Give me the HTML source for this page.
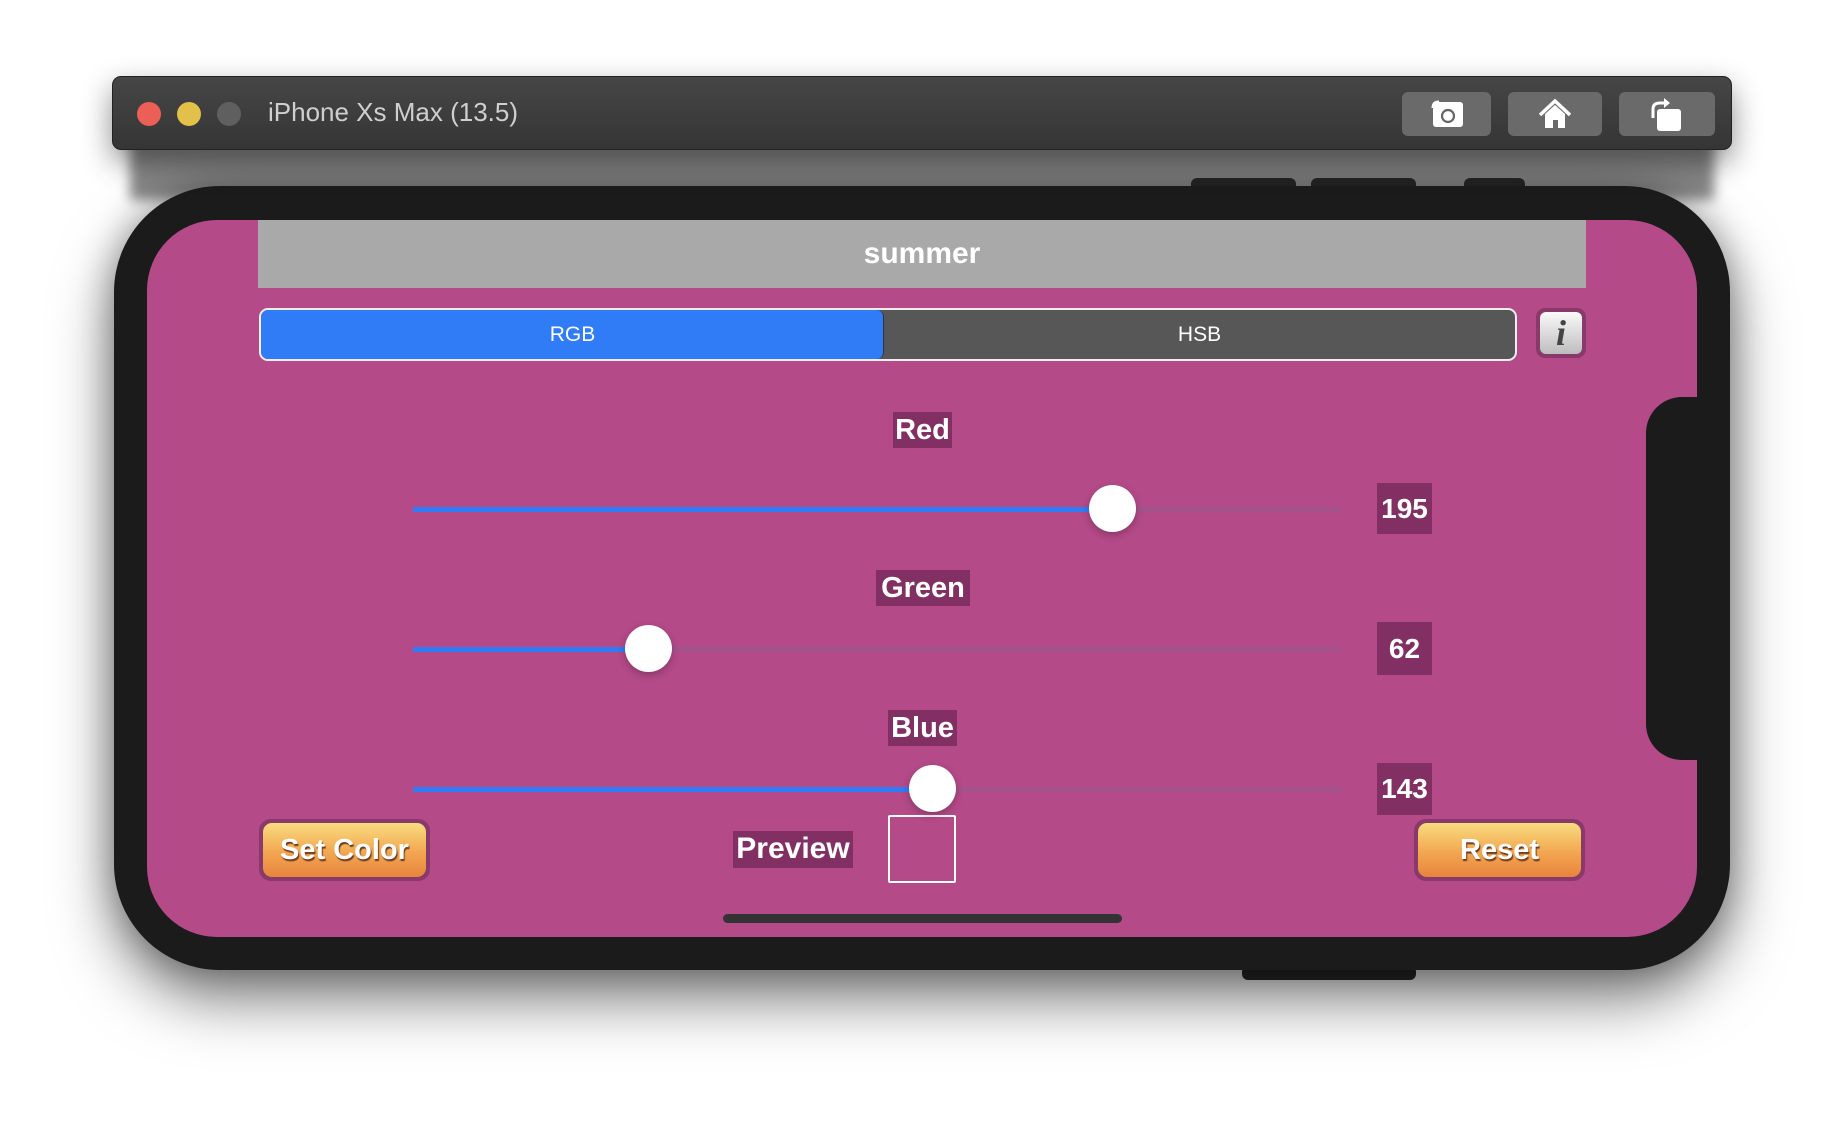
<!DOCTYPE html>
<html><head><meta charset="utf-8"><style>
*{margin:0;padding:0;box-sizing:border-box}
body{width:1844px;height:1136px;background:#fff;position:relative;overflow:hidden;font-family:"Liberation Sans",sans-serif}
.abs{position:absolute}
#tb{left:112px;top:76px;width:1620px;height:74px;border-radius:9px;background:linear-gradient(#464646,#353535);box-shadow:0 12px 30px rgba(0,0,0,.45);border:1px solid #222;z-index:3}
#gap{left:130px;top:140px;width:1584px;height:60px;background:#8a8a8a;filter:blur(6px);z-index:1}
.tl{width:24px;height:24px;border-radius:50%;top:102px;z-index:4}
.tbtn{top:92px;height:44px;border-radius:6px;background:#6a6a6a;z-index:4}
#phone{left:114px;top:186px;width:1616px;height:784px;border-radius:106px;background:#1b1b1b;box-shadow:0 30px 60px rgba(0,0,0,.5),0 0 35px rgba(0,0,0,.3);z-index:2}
.side{background:#2a2a2a;border-radius:6px;height:14px;z-index:2}
#screen{left:147px;top:220px;width:1550px;height:717px;border-radius:70px;background:#b44a88;z-index:3;overflow:hidden}
#notch{left:1646px;top:397px;width:60px;height:363px;background:#1b1b1b;border-radius:36px 0 0 36px;z-index:4}
.lbl{background:#823063;color:#fff;font-weight:bold;font-size:29px;text-align:center;z-index:5;line-height:36px}
.track{height:5px;left:413px;width:928px;background:rgba(150,90,140,.6);z-index:5}
.fill{height:5px;left:413px;background:#2f7cf6;z-index:5}
.thumb{width:47px;height:47px;border-radius:50%;background:#fff;box-shadow:0 3px 8px rgba(0,0,0,.25);z-index:6}
.val{background:#823063;color:#fff;font-weight:bold;font-size:28px;text-align:center;z-index:5}
.btn{height:62px;border-radius:12px;background:#8a3a6a;z-index:5;padding:4px}
.btn div{width:100%;height:100%;border-radius:9px;background:linear-gradient(#f9dc80,#f2a650 55%,#e8843e);color:#fff;font-weight:bold;font-size:29px;text-align:center;line-height:54px;text-shadow:1px 2px 1px #6b3a20}
</style></head><body>
<div id="gap" class="abs"></div>
<div id="tb" class="abs"></div>
<div class="abs tl" style="left:137px;background:#ec5f57"></div>
<div class="abs tl" style="left:177px;background:#e2c04a"></div>
<div class="abs tl" style="left:217px;background:#5f5f5f"></div>
<div class="abs" style="left:268px;top:97px;font-size:26px;color:#cfcfcf;z-index:4">iPhone Xs Max (13.5)</div>
<div class="abs tbtn" style="left:1402px;width:89px"><svg width="89" height="44"><rect x="31" y="10" width="30" height="25" rx="3" fill="#fff"/><path d="M31 16 q0-6 6-6" stroke="#fff" fill="none" stroke-width="3"/><circle cx="46" cy="24" r="6" fill="none" stroke="#666" stroke-width="2.2"/><path d="M28 14 v12" stroke="#6a6a6a" stroke-width="2"/></svg></div>
<div class="abs tbtn" style="left:1508px;width:94px"><svg width="94" height="44"><path d="M32 23 L47 9 L62 23" stroke="#fff" stroke-width="3.5" fill="none"/><path d="M37 22 L47 13 L57 22 V36 H37Z" fill="#fff"/><rect x="45" y="28" width="5" height="8" fill="#6a6a6a"/></svg></div>
<div class="abs tbtn" style="left:1619px;width:96px"><svg width="96" height="44"><rect x="38" y="17" width="24" height="22" rx="3" fill="#fff"/><path d="M34 26 V17 q0-6 7-6 h5" stroke="#fff" stroke-width="3" fill="none"/><path d="M45 6 L51 11 L45 16Z" fill="#fff"/></svg></div>
<div class="abs side" style="left:1191px;top:178px;width:105px"></div>
<div class="abs side" style="left:1311px;top:178px;width:105px"></div>
<div class="abs side" style="left:1464px;top:178px;width:61px"></div>
<div class="abs side" style="left:1242px;top:966px;width:174px"></div>
<div id="phone" class="abs"></div>
<div id="screen" class="abs"></div>
<div id="notch" class="abs"></div>
<div class="abs" style="left:258px;top:220px;width:1328px;height:68px;background:#a9a9a9;z-index:5;color:#fff;font-weight:bold;font-size:30px;text-align:center;line-height:68px">summer</div>
<div class="abs" style="left:259px;top:308px;width:1258px;height:53px;border:2px solid #eee;border-radius:9px;background:#575757;z-index:5;overflow:hidden">
<div class="abs" style="left:0;top:0;width:623px;height:49px;background:#2f7cf6;border-right:1px solid #333;border-radius:7px"></div>
<div class="abs" style="left:0;top:0;width:623px;line-height:49px;text-align:center;color:#fff;font-size:21px">RGB</div>
<div class="abs" style="left:623px;top:0;width:631px;line-height:49px;text-align:center;color:#fff;font-size:21px">HSB</div></div>
<div class="abs" style="left:1536px;top:308px;width:50px;height:50px;border-radius:9px;background:#8a3a6a;padding:4px;z-index:5"><div style="width:100%;height:100%;border-radius:6px;background:linear-gradient(#fafafa,#bdbdbd);color:#444;font:italic bold 36px 'Liberation Serif',serif;text-align:center;line-height:42px">i</div></div>

<div class="abs lbl" style="left:893px;top:412px;width:59px">Red</div>
<div class="abs track" style="top:507px"></div><div class="abs fill" style="top:507px;width:700px"></div>
<div class="abs thumb" style="left:1089px;top:485px"></div>
<div class="abs val" style="left:1377px;top:483px;width:55px;height:51px;line-height:51px">195</div>

<div class="abs lbl" style="left:876px;top:570px;width:94px">Green</div>
<div class="abs track" style="top:647px"></div><div class="abs fill" style="top:647px;width:235px"></div>
<div class="abs thumb" style="left:625px;top:625px"></div>
<div class="abs val" style="left:1377px;top:622px;width:55px;height:53px;line-height:53px">62</div>

<div class="abs lbl" style="left:888px;top:710px;width:69px">Blue</div>
<div class="abs track" style="top:787px"></div><div class="abs fill" style="top:787px;width:520px"></div>
<div class="abs thumb" style="left:909px;top:765px"></div>
<div class="abs val" style="left:1377px;top:763px;width:55px;height:52px;line-height:52px">143</div>

<div class="abs btn" style="left:259px;top:819px;width:171px"><div>Set Color</div></div>
<div class="abs lbl" style="left:733px;top:831px;width:120px;height:37px;font-size:30px">Preview</div>
<div class="abs" style="left:888px;top:815px;width:68px;height:68px;border:2px solid #fff;border-radius:2px;z-index:5"></div>
<div class="abs btn" style="left:1414px;top:819px;width:171px"><div>Reset</div></div>
<div class="abs" style="left:723px;top:914px;width:399px;height:9px;border-radius:5px;background:#333;z-index:5"></div>
</body></html>
